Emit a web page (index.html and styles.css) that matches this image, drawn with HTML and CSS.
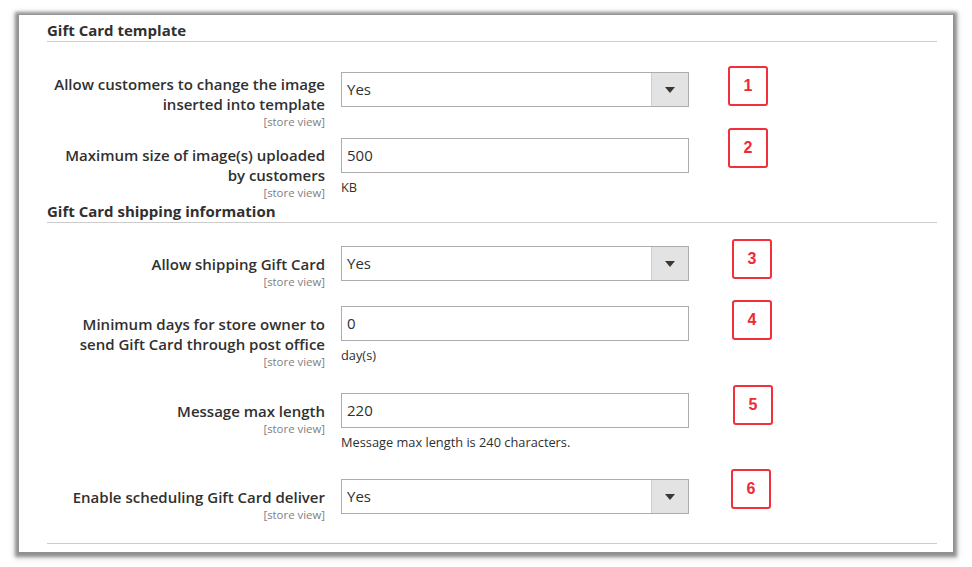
FILE: index.html
```html
<!DOCTYPE html>
<html>
<head>
<meta charset="utf-8">
<link rel="stylesheet" href="styles.css">
</head>
<body>
<div class="panel">
  <div class="section-title">Gift Card template</div>

  <div class="row row-1">
    <div class="label label-tight">
      <span class="label-text">Allow customers to change the image inserted into template</span>
      <span class="scope">[store view]</span>
    </div>
    <div class="control">
      <div class="select"><span class="select-value">Yes</span><span class="select-btn"><span class="caret"></span></span></div>
    </div>
    <div class="mark mark-1">1</div>
  </div>

  <div class="row row-2">
    <div class="label label-narrow">
      <span class="label-text">Maximum size of image(s) uploaded by customers</span>
      <span class="scope">[store view]</span>
    </div>
    <div class="control">
      <div class="input">500</div>
      <div class="note">KB</div>
    </div>
    <div class="mark mark-2">2</div>
  </div>

  <div class="section-title section-2">Gift Card shipping information</div>

  <div class="row row-3">
    <div class="label">
      <span class="label-text">Allow shipping Gift Card</span>
      <span class="scope">[store view]</span>
    </div>
    <div class="control">
      <div class="select"><span class="select-value">Yes</span><span class="select-btn"><span class="caret"></span></span></div>
    </div>
    <div class="mark mark-3">3</div>
  </div>

  <div class="row row-4">
    <div class="label">
      <span class="label-text">Minimum days for store owner to send Gift Card through post office</span>
      <span class="scope">[store view]</span>
    </div>
    <div class="control">
      <div class="input">0</div>
      <div class="note">day(s)</div>
    </div>
    <div class="mark mark-4">4</div>
  </div>

  <div class="row row-5">
    <div class="label">
      <span class="label-text">Message max length</span>
      <span class="scope">[store view]</span>
    </div>
    <div class="control">
      <div class="input">220</div>
      <div class="note">Message max length is 240 characters.</div>
    </div>
    <div class="mark mark-5">5</div>
  </div>

  <div class="row row-6">
    <div class="label">
      <span class="label-text">Enable scheduling Gift Card deliver</span>
      <span class="scope">[store view]</span>
    </div>
    <div class="control">
      <div class="select"><span class="select-value">Yes</span><span class="select-btn"><span class="caret"></span></span></div>
    </div>
    <div class="mark mark-6">6</div>
  </div>

  <div class="end-rule"></div>
</div>
</body>
</html>
```

FILE: styles.css
```css
html, body {
  margin: 0;
  padding: 0;
  background: #ffffff;
}

body {
  font-family: "Open Sans", "Noto Sans", "Liberation Sans", sans-serif;
  color: #303030;
  width: 972px;
  height: 567px;
  overflow: hidden;
}

.panel {
  box-sizing: border-box;
  margin: 15px 0 0 19px;
  width: 934px;
  height: 537px;
  padding: 5px 16px 0 28px;
  background: #ffffff;
  box-shadow: 0 1px 3px 4px rgba(0, 0, 0, 0.36), 0 2px 6px 5px rgba(0, 0, 0, 0.12);
}

.section-title {
  font-size: 15px;
  font-weight: 700;
  line-height: 20px;
  color: #303030;
  border-bottom: 1px solid #cccccc;
  height: 21px;
}

.section-2 {
  margin-top: 2px;
}

.row {
  display: flex;
  align-items: flex-start;
}

.row-1 { margin-top: 30px; }
.row-2 { margin-top: 10px; }
.row-3 { margin-top: 23px; }
.row-4 { margin-top: 18px; }
.row-5 { margin-top: 25px; }
.row-6 { margin-top: 30px; }

.label {
  box-sizing: border-box;
  width: 278px;
  padding-top: 8px;
  text-align: right;
  display: flex;
  flex-direction: column;
  align-items: flex-end;
}

.label-tight {
  padding-top: 2px;
}

.label-narrow {
  padding-top: 7px;
}

.label-text {
  font-size: 15px;
  font-weight: 600;
  line-height: 20px;
  color: #303030;
}

.scope {
  margin-top: 2px;
  font-size: 11.4px;
  line-height: 12px;
  color: #808080;
}

.control {
  margin-left: 16px;
  width: 348px;
}

.select,
.input {
  box-sizing: border-box;
  height: 35px;
  border: 1px solid #adadad;
  background: #ffffff;
  font-size: 15px;
  line-height: 33px;
  padding-left: 5px;
  color: #303030;
}

.select {
  display: flex;
  padding-left: 0;
}

.select-value {
  flex: 1;
  padding-left: 5px;
}

.select-btn {
  width: 36px;
  background: #e3e3e3;
  border-left: 1px solid #cfcfcf;
  display: flex;
  align-items: center;
  justify-content: center;
}

.caret {
  width: 0;
  height: 0;
  border-left: 5px solid transparent;
  border-right: 5px solid transparent;
  border-top: 6px solid #41362f;
}

.note {
  margin-top: 7px;
  font-size: 12.8px;
  line-height: 14px;
  color: #303030;
}

.mark {
  box-sizing: border-box;
  width: 40px;
  height: 40px;
  border: 2px solid #f2303c;
  border-radius: 3px;
  font-family: "Liberation Sans", Arial, sans-serif;
  font-weight: 700;
  font-size: 16px;
  color: #ee2a36;
  display: flex;
  align-items: center;
  justify-content: center;
}

.mark-1 { margin: -6px 0 0 39px; }
.mark-2 { margin: -10px 0 0 39px; }
.mark-3 { margin: -7px 0 0 43px; }
.mark-4 { margin: -6px 0 0 43px; }
.mark-5 { margin: -8px 0 0 44px; }
.mark-6 { margin: -10px 0 0 42px; }

.end-rule {
  margin-top: 22px;
  border-top: 1px solid #cccccc;
}
```
